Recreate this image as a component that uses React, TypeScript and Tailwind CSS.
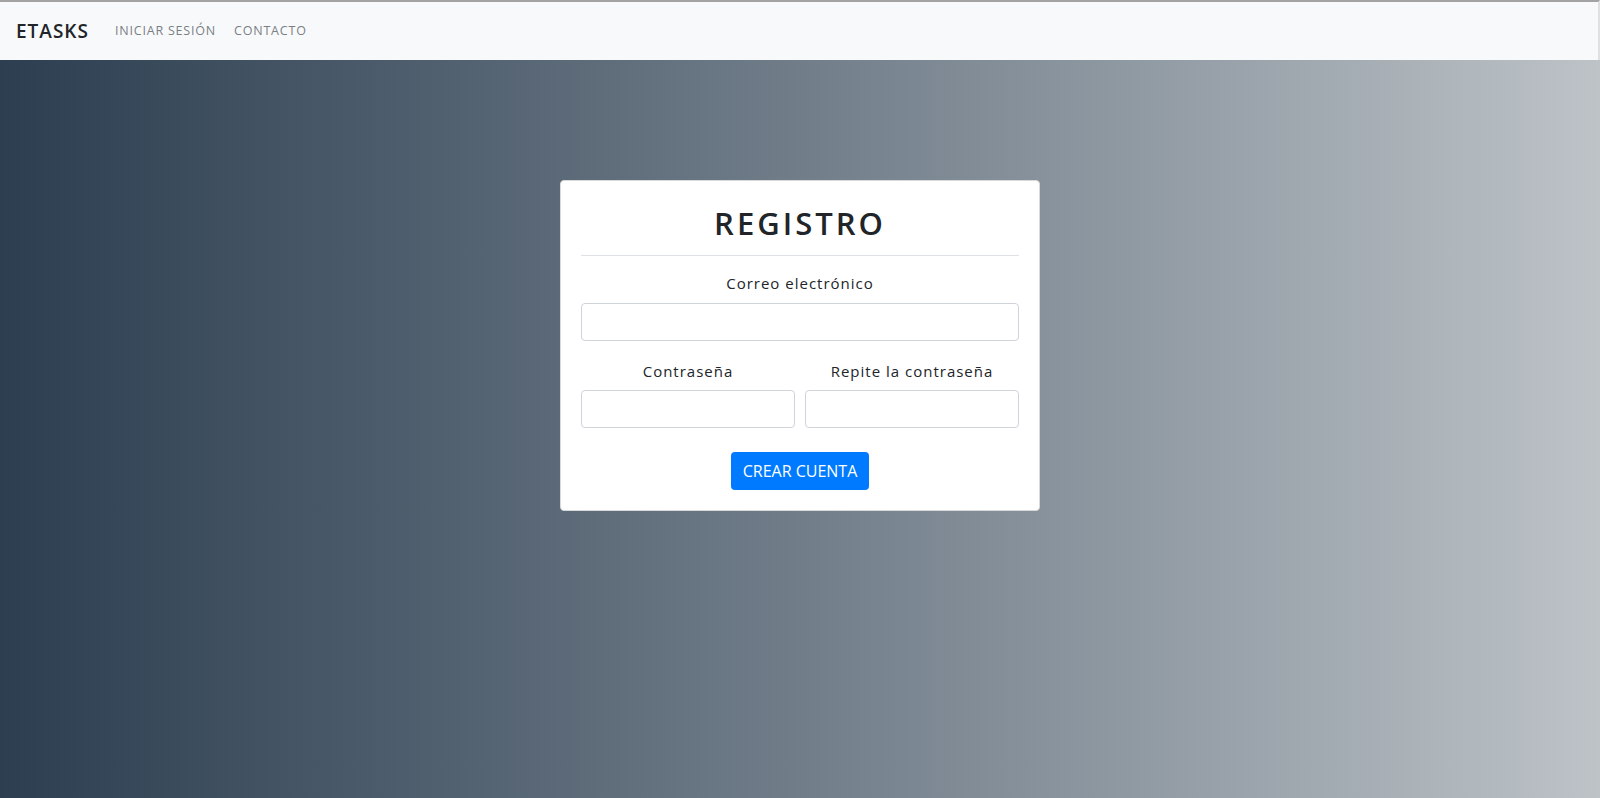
export default function App() {
  return (
    <div className="flex min-h-screen flex-col font-['Open_Sans',sans-serif]">
      {/* Navbar */}
      <nav className="flex h-[60px] items-center border-t-2 border-r-2 border-t-[#a3a3a3] border-r-[#e0e0e0] bg-[#f8f9fa] px-4">
        <span className="mr-[26px] text-[19px] font-semibold tracking-[1px] text-[#212529]">
          ETASKS
        </span>
        <a className="mr-[18px] text-[12.5px] tracking-[0.8px] text-[#7a7f86]">INICIAR SESIÓN</a>
        <a className="text-[12.5px] tracking-[0.8px] text-[#7a7f86]">CONTACTO</a>
      </nav>

      {/* Main */}
      <main className="flex-1 bg-gradient-to-r from-[#2c3e50] to-[#bdc3c7] pt-[120px]">
        <div className="mx-auto w-[480px] rounded border border-[#d9d9d9] bg-white px-5 pt-5 pb-5 text-[#212529]">
          <h1 className="text-center text-[31px] leading-[44px] font-semibold tracking-[3px]">
            REGISTRO
          </h1>
          <hr className="mt-[10px] border-[#dee2e6]" />

          <label className="mt-[16px] block text-center text-[15px] tracking-[1px]">
            Correo electrónico
          </label>
          <input className="mt-[8px] block h-[38px] w-full rounded border border-[#ced4da]" />

          <div className="mt-[19px] grid grid-cols-2 gap-[10px]">
            <div>
              <label className="block text-center text-[15px] tracking-[1px]">Contraseña</label>
              <input
                type="password"
                className="mt-[8px] block h-[38px] w-full rounded border border-[#ced4da]"
              />
            </div>
            <div>
              <label className="block text-center text-[15px] tracking-[1px]">
                Repite la contraseña
              </label>
              <input
                type="password"
                className="mt-[8px] block h-[38px] w-full rounded border border-[#ced4da]"
              />
            </div>
          </div>

          <div className="mt-[24px] flex justify-center">
            <button className="h-[38px] rounded bg-[#007bff] px-3 text-[16px] text-white">
              CREAR CUENTA
            </button>
          </div>
        </div>
      </main>
    </div>
  );
}
